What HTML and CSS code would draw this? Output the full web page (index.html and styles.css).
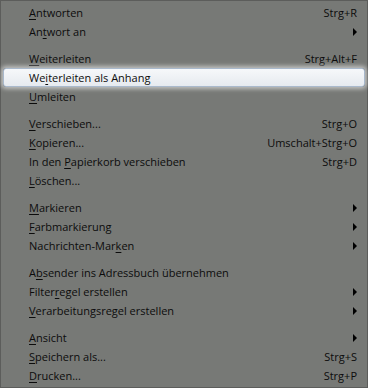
FILE: index.html
```html
<!DOCTYPE html>
<html>
<head>
<meta charset="utf-8">
<link rel="stylesheet" href="styles.css">
</head>
<body>
<div class="menu">
  <div class="item"><span class="label"><u>A</u>ntworten</span><span class="key">Strg+R</span></div>
  <div class="item"><span class="label">An<u>t</u>wort an</span><span class="arrow"></span></div>
  <div class="sep"></div>
  <div class="item"><span class="label"><u>W</u>eiterleiten</span><span class="key">Strg+Alt+F</span></div>
  <div class="item active"><span class="label">We<u>i</u>terleiten als Anhang</span></div>
  <div class="item"><span class="label"><u>U</u>mleiten</span></div>
  <div class="sep"></div>
  <div class="item"><span class="label"><u>V</u>erschieben...</span><span class="key">Strg+O</span></div>
  <div class="item"><span class="label"><u>K</u>opieren...</span><span class="key">Umschalt+Strg+O</span></div>
  <div class="item"><span class="label">In den <u>P</u>apierkorb verschieben</span><span class="key">Strg+D</span></div>
  <div class="item"><span class="label"><u>L</u>öschen...</span></div>
  <div class="sep"></div>
  <div class="item"><span class="label"><u>M</u>arkieren</span><span class="arrow"></span></div>
  <div class="item"><span class="label"><u>F</u>arbmarkierung</span><span class="arrow"></span></div>
  <div class="item"><span class="label">Nachrichten-Mar<u>k</u>en</span><span class="arrow"></span></div>
  <div class="sep"></div>
  <div class="item"><span class="label">A<u>b</u>sender ins Adressbuch übernehmen</span></div>
  <div class="item"><span class="label">Filter<u>r</u>egel erstellen</span><span class="arrow"></span></div>
  <div class="item"><span class="label"><u>V</u>erarbeitungsregel erstellen</span><span class="arrow"></span></div>
  <div class="sep"></div>
  <div class="item"><span class="label"><u>A</u>nsicht</span><span class="arrow"></span></div>
  <div class="item"><span class="label"><u>S</u>peichern als...</span><span class="key">Strg+S</span></div>
  <div class="item"><span class="label"><u>D</u>rucken...</span><span class="key">Strg+P</span></div>
</div>
</body>
</html>
```
FILE: styles.css
```css
html, body {
  margin: 0;
  padding: 0;
  background: #777976;
}
.menu {
  width: 368px;
  height: 388px;
  box-sizing: border-box;
  border: 1px solid #5c5d5b;
  padding: 2px 2px 2px 2px;
  background: #777976;
  font-family: "Open Sans", "Noto Sans", sans-serif;
  font-size: 11px;
  color: #0c0c0c;
  display: flex;
  flex-direction: column;
}
.item {
  height: 19px;
  display: flex;
  align-items: center;
  justify-content: space-between;
  padding: 0 8px 0 26px;
  box-sizing: border-box;
  white-space: nowrap;
}
.item u {
  text-decoration-thickness: 1px;
  text-underline-offset: 2px;
}
.sep {
  height: 8px;
}
.key {
  padding-right: 0;
}
.arrow {
  width: 0;
  height: 0;
  border-top: 4px solid transparent;
  border-bottom: 4px solid transparent;
  border-left: 4px solid #000;
  margin-right: 0;
}
.active {
  background: linear-gradient(#f6f8fa, #e6eaef);
  border: 1px solid #a9b9cc;
  border-radius: 3px;
  padding-left: 25px;
  box-shadow: 0 0 4px 2px rgba(255, 255, 255, 0.55);
}
```
